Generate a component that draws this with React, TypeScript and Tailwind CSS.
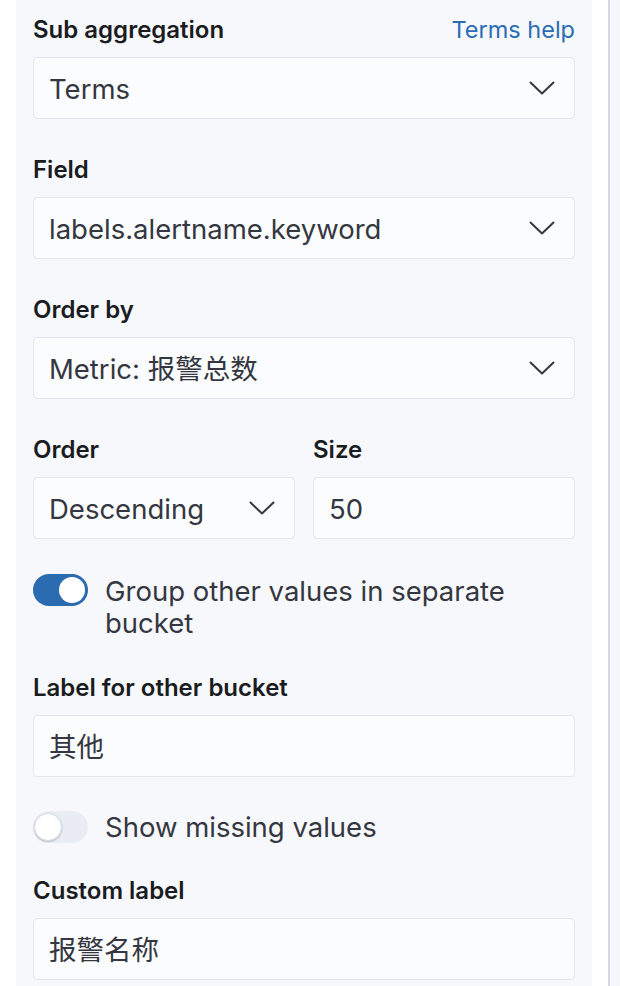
import React from "react";

const font = { fontFamily: 'Inter, "Noto Sans CJK SC", sans-serif' };

function Chevron() {
  return (
    <svg width="26" height="14" viewBox="0 0 26 14" fill="none" className="shrink-0">
      <path d="M1.5 1.5 L13 12.5 L24.5 1.5" stroke="#343741" strokeWidth="2" strokeLinecap="round" strokeLinejoin="round" />
    </svg>
  );
}

function Label({ children, right }: { children: React.ReactNode; right?: React.ReactNode }) {
  return (
    <div className="flex items-center justify-between h-[28px] mb-[13px]">
      <span className="text-[24px] leading-[28px] font-semibold text-[#1a1c21] whitespace-nowrap">{children}</span>
      {right}
    </div>
  );
}

function Select({ value }: { value: string }) {
  return (
    <div className="h-[62px] flex items-center justify-between pl-[15px] pr-[19px] bg-[#fbfcfd] border border-[#e3e6ee] rounded-[4px]">
      <span className="text-[27.5px] text-[#343741] whitespace-nowrap pt-[3px]">{value}</span>
      <Chevron />
    </div>
  );
}

function Input({ value }: { value: string }) {
  return (
    <div className="h-[62px] flex items-center pl-[15px] pr-[19px] bg-[#fbfcfd] border border-[#e3e6ee] rounded-[4px]">
      <span className="text-[27.5px] text-[#343741] whitespace-nowrap pt-[3px]">{value}</span>
    </div>
  );
}

function Switch({ on }: { on: boolean }) {
  return on ? (
    <div className="w-[55px] h-[32px] rounded-full bg-[#2b6cb0] flex items-center justify-end pr-[3px] shrink-0">
      <div className="w-[26px] h-[26px] rounded-full bg-white" />
    </div>
  ) : (
    <div className="w-[55px] h-[32px] rounded-full bg-[#e9edf3] flex items-center pl-[1px] shrink-0">
      <div className="w-[28px] h-[28px] rounded-full bg-white border border-[#d3dae6] shadow-[0_1px_2px_rgba(0,0,0,0.2)]" />
    </div>
  );
}

export default function App() {
  return (
    <div style={font} className="w-[620px] h-[986px] overflow-hidden flex bg-white">
      <div className="w-[16px] bg-white shrink-0" />
      <div className="w-[576px] bg-[#f7f8fc] px-[17px] pt-[16px] shrink-0 flex flex-col">
        <Label right={<span className="text-[23.5px] leading-[28px] text-[#2a6db4]">Terms help</span>}>
          Sub aggregation
        </Label>
        <Select value="Terms" />

        <div className="mt-[37px]">
          <Label>Field</Label>
          <Select value="labels.alertname.keyword" />
        </div>

        <div className="mt-[37px]">
          <Label>Order by</Label>
          <Select value="Metric: 报警总数" />
        </div>

        <div className="mt-[37px] flex gap-[18px]">
          <div className="w-[262px]">
            <Label>Order</Label>
            <Select value="Descending" />
          </div>
          <div className="flex-1">
            <Label>Size</Label>
            <Input value="50" />
          </div>
        </div>

        <div className="mt-[35px] flex items-start gap-[17px]">
          <Switch on />
          <span className="text-[27.5px] leading-[32px] text-[#343741] pt-[1px]">
            Group other values in separate bucket
          </span>
        </div>

        <div className="mt-[35px]">
          <Label>Label for other bucket</Label>
          <Input value="其他" />
        </div>

        <div className="mt-[33px] flex items-center gap-[17px]">
          <Switch on={false} />
          <span className="text-[27.5px] leading-[32px] text-[#343741] pt-[1px]">Show missing values</span>
        </div>

        <div className="mt-[34px]">
          <Label>Custom label</Label>
          <Input value="报警名称" />
        </div>
      </div>
      <div className="w-[16px] bg-white shrink-0" />
      <div className="w-[2px] bg-[#d3dae6] shrink-0" />
      <div className="flex-1 bg-[#f5f7fa]" />
    </div>
  );
}
